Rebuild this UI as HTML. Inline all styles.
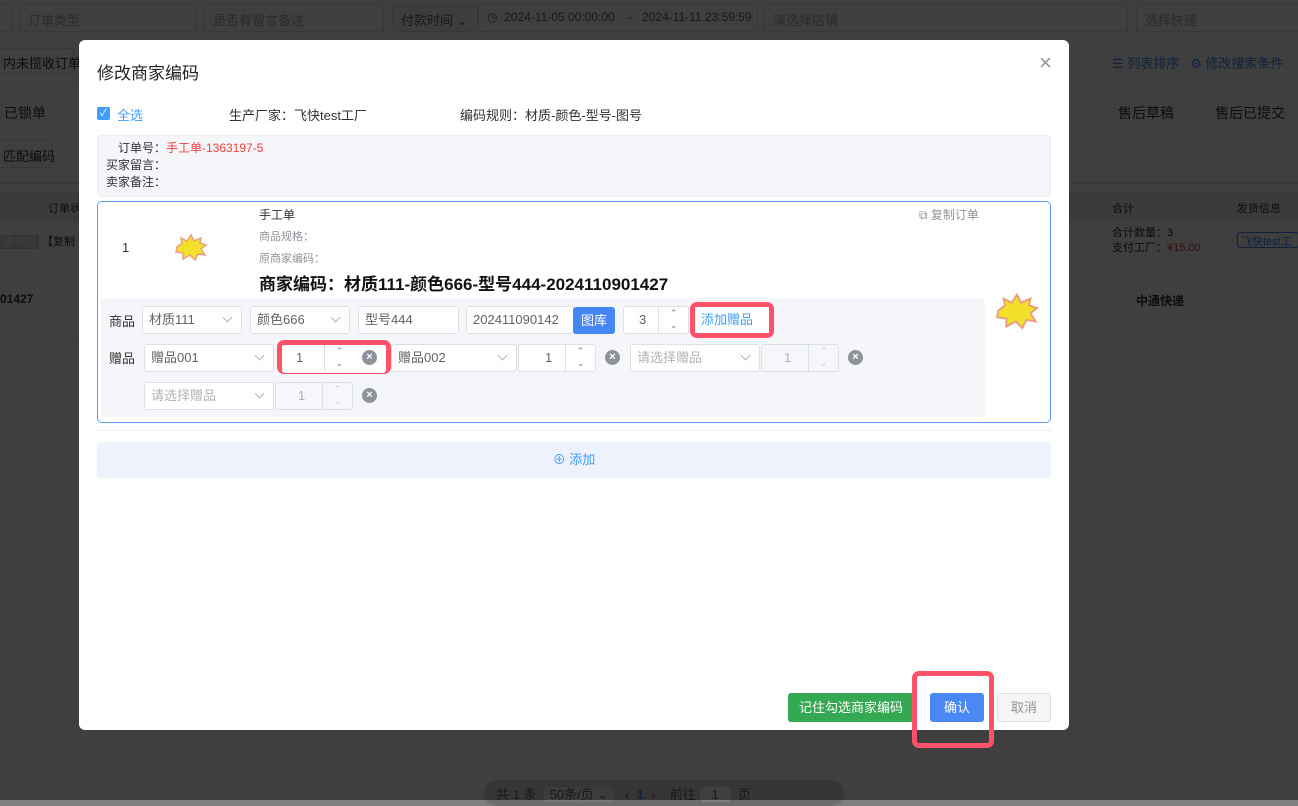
<!DOCTYPE html><html><head><meta charset="utf-8"><style>
*{box-sizing:border-box;margin:0;padding:0}
html,body{background:#fff}
body{width:1298px;height:800px;position:relative;overflow:hidden;font-family:"Liberation Sans","Noto Sans CJK SC",sans-serif;font-size:13px;color:#303133}
.a{position:absolute;white-space:nowrap}
.bg{border:1px solid #dcdfe6;border-radius:3px;background:#fff;color:#a8abb2}
.dlg{position:absolute;left:79px;top:40px;width:990px;height:690px;background:#fff;border-radius:6px;box-shadow:0 0 0 3000px rgba(0,0,0,0.5)}
.in{position:absolute;height:28px;border:1px solid #dcdfe6;border-radius:3px;background:#fff;font-size:13px;line-height:26px;padding-left:6px;color:#606266}
.chev{position:absolute;right:10px;top:7px;width:7px;height:7px;border-right:1px solid #b0b3b8;border-bottom:1px solid #b0b3b8;transform:rotate(45deg)}
.x{position:absolute;width:15px;height:15px;border-radius:50%;background:#8e939b;color:#fff;font-size:11px;line-height:15px;text-align:center;font-weight:bold}
.red{position:absolute;border:5px solid #ff5268;border-radius:7px}
.sp{position:absolute;right:0;top:0;width:30px;height:26px;border-left:1px solid #dcdfe6;font-size:9px;color:#777;text-align:center;line-height:12px}
</style></head><body>
<div class="a bg" style="left:-4px;top:4px;width:16px;height:28px"></div>
<div class="a bg" style="left:19px;top:4px;width:178px;height:28px;padding:5px 8px">订单类型</div>
<div class="a bg" style="left:204px;top:4px;width:180px;height:28px;padding:5px 8px">是否有留言备注</div>
<div class="a bg" style="left:392px;top:4px;width:86px;height:28px;padding:5px 8px;background:#f5f7fa;color:#606266">付款时间 ⌄</div>
<div class="a bg" style="left:478px;top:4px;width:280px;height:28px;padding:5px 8px;font-size:12px;color:#606266">◷ &nbsp;2024-11-05 00:00:00 &nbsp;&nbsp; - &nbsp;&nbsp;2024-11-11 23:59:59</div>
<div class="a bg" style="left:764px;top:4px;width:364px;height:28px;padding:5px 8px">请选择店铺</div>
<div class="a bg" style="left:1136px;top:4px;width:170px;height:28px;padding:5px 8px">选择快递</div>
<div class="a bg" style="left:-4px;top:48px;width:78px;height:26px;padding:4px 6px;color:#303133">内未揽收订单</div>
<div class="a" style="left:1112px;top:53px;color:#4586f5">☰ 列表排序 &nbsp;&nbsp;⚙ 修改搜索条件</div>
<div class="a" style="left:0;top:84px;width:1298px;height:1px;background:#e4e7ed"></div>
<div class="a" style="left:4px;top:103px;font-size:14px;color:#303133">已锁单</div>
<div class="a" style="left:1118px;top:103px;font-size:14px;color:#303133">售后草稿</div>
<div class="a" style="left:1215px;top:103px;font-size:14px;color:#303133">售后已提交</div>
<div class="a bg" style="left:-4px;top:140px;width:56px;height:28px;padding:5px 6px;color:#303133">匹配编码</div>
<div class="a" style="left:0;top:182px;width:1298px;height:2px;background:#e4e7ed"></div>
<div class="a" style="left:0;top:192px;width:1298px;height:30px;background:#e6ecf7"></div>
<div class="a" style="left:48px;top:200px;font-size:11px">订单状</div>
<div class="a" style="left:1112px;top:200px;font-size:11px">合计</div>
<div class="a" style="left:1237px;top:200px;font-size:11px">发货信息</div>
<div class="a" style="left:0;top:233px;font-size:11px"><span style="background:#d4d4d4;color:#fff;padding:1px 3px">待发货</span> 【复制</div>
<div class="a" style="left:1112px;top:226px;font-size:11px;line-height:15px">合计数量：3<br>支付工厂：<span style="color:#f03030">¥15.00</span></div>
<div class="a" style="left:1237px;top:232px;width:62px;height:16px;border:1px solid #4586f5;border-radius:3px;font-size:11px;color:#4586f5;padding-left:3px">飞快test工</div>
<div class="a" style="left:0;top:292px;font-size:12px;font-weight:bold">01427</div>
<div class="a" style="left:1136px;top:292px;font-size:12px;font-weight:bold">中通快递</div>
<div class="a" style="left:0;top:337px;width:1298px;height:1px;background:#e4e7ed"></div>
<div class="a" style="left:484px;top:780px;width:360px;height:26px;background:#d8d8d8;border-radius:13px;color:#606266;padding:4px 12px;font-size:13px">共 1 条 &nbsp;<span style="background:#f0f0f0;padding:0 6px;border-radius:3px">50条/页 ⌄</span> &nbsp;&nbsp;‹ &nbsp;<b style="color:#4586f5">1</b>&nbsp; › &nbsp;&nbsp;&nbsp;前往 <span style="background:#fff;padding:0 12px;border-radius:4px">1</span> &nbsp;页</div>
<svg class="a" style="left:0;top:0" width="1298" height="800"><rect width="1298" height="800" fill="#000" fill-opacity="0.5"/></svg>
<div class="dlg">
<div class="a" style="left:18px;top:19px;font-size:17px;color:#222">修改商家编码</div>
<div class="a" style="left:960px;top:10px;font-size:22px;color:#909399">×</div>
<div class="a" style="left:18px;top:67px;width:13px;height:13px;background:#409eff;border-radius:2px;color:#fff;font-size:10px;line-height:13px;text-align:center">✓</div>
<div class="a" style="left:38px;top:65px;color:#409eff">全选</div>
<div class="a" style="left:150px;top:65px">生产厂家：飞快test工厂</div>
<div class="a" style="left:381px;top:65px">编码规则：材质-颜色-型号-图号</div>
<div class="a" style="left:18px;top:95px;width:954px;height:62px;background:#f5f6f9;border:1px solid #ebeef5;border-radius:4px;font-size:12px;line-height:17px;padding:4px 8px">
<div style="padding-left:12px">订单号：<span style="color:#f04040">手工单-1363197-5</span></div><div>买家留言：</div><div>卖家备注：</div></div>
<div class="a" style="left:18px;top:161px;width:954px;height:222px;border:1px solid #5b9cf0;border-radius:5px"></div>
<div class="a" style="left:43px;top:200px">1</div>
<svg class="a" style="left:94px;top:193px" width="36" height="30" viewBox="0 0 36 30"><polygon points="4,14 9,10 8,5 14,8 18,2 21,8 28,5 27,10 33,12 28,16 32,22 25,21 22,27 17,22 10,26 10,20 3,19" fill="#f2e12a" stroke="#e8a080" stroke-width="1.5"/></svg>
<div class="a" style="left:180px;top:166px;font-size:12px">手工单</div>
<div class="a" style="left:180px;top:188px;font-size:11px;color:#909399">商品规格：</div>
<div class="a" style="left:180px;top:210px;font-size:11px;color:#909399">原商家编码：</div>
<div class="a" style="left:180px;top:230px;font-size:17px;font-weight:bold;color:#111">商家编码：材质111-颜色666-型号444-2024110901427</div>
<div class="a" style="left:840px;top:166px;font-size:12px;color:#909399">⧉ 复制订单</div>
<svg class="a" style="left:914px;top:252px" width="48" height="40" viewBox="0 0 36 30"><polygon points="4,14 9,10 8,5 14,8 18,2 21,8 28,5 27,10 33,12 28,16 32,22 25,21 22,27 17,22 10,26 10,20 3,19" fill="#f2e12a" stroke="#e8a080" stroke-width="1.5"/></svg>
<div class="a" style="left:22px;top:258px;width:884px;height:119px;background:#f5f6f9;border-radius:4px"></div>
<div class="a" style="left:30px;top:271px">商品</div>
<div class="in" style="left:63px;top:266px;width:100px">材质111<i class="chev"></i></div>
<div class="in" style="left:171px;top:266px;width:100px">颜色666<i class="chev"></i></div>
<div class="in" style="left:279px;top:266px;width:101px">型号444</div>
<div class="in" style="left:387px;top:266px;width:108px">202411090142</div>
<div class="a" style="left:494px;top:267px;width:42px;height:27px;background:#4586f5;border-radius:3px;color:#fff;text-align:center;line-height:27px">图库</div>
<div class="in" style="left:544px;top:266px;width:66px;text-align:left;padding-left:15px">3<div class="sp">⌃<br>⌄</div></div>
<div class="red" style="left:611px;top:262px;width:84px;height:36px"></div>
<div class="a" style="left:616px;top:267px;width:74px;height:26px;background:#fff;color:#409eff;line-height:26px;padding-left:6px">添加赠品</div>
<div class="a" style="left:30px;top:308px">赠品</div>
<div class="in" style="left:65px;top:304px;width:130px">赠品001<i class="chev"></i></div>
<div class="red" style="left:198px;top:300px;width:114px;height:34px"></div>
<div class="in" style="left:203px;top:305px;width:104px;border:none;padding-left:0"><span style="position:absolute;left:14px">1</span><div class="sp" style="right:32px;border-color:#ddd">⌃<br>⌄</div></div>
<div class="x" style="left:283px;top:310px">×</div>
<div class="in" style="left:312px;top:304px;width:126px">赠品002<i class="chev"></i></div>
<div class="in" style="left:439px;top:304px;width:78px;text-align:left;padding-left:26px">1<div class="sp">⌃<br>⌄</div></div>
<div class="x" style="left:526px;top:310px">×</div>
<div class="in" style="left:551px;top:304px;width:130px;color:#b0b3b8">请选择赠品<i class="chev"></i></div>
<div class="in" style="left:682px;top:304px;width:78px;text-align:left;padding-left:22px;background:#f5f7fa;color:#b0b3b8">1<div class="sp" style="color:#ccc">⌃<br>⌄</div></div>
<div class="x" style="left:769px;top:310px">×</div>
<div class="in" style="left:65px;top:342px;width:130px;color:#b0b3b8">请选择赠品<i class="chev"></i></div>
<div class="in" style="left:196px;top:342px;width:78px;text-align:left;padding-left:22px;background:#f5f7fa;color:#b0b3b8">1<div class="sp" style="color:#ccc">⌃<br>⌄</div></div>
<div class="x" style="left:283px;top:348px">×</div>
<div class="a" style="left:18px;top:390px;width:954px;height:1px;background:#ebeef5"></div>
<div class="a" style="left:18px;top:402px;width:954px;height:36px;background:#edf2fc;border-radius:3px;text-align:center;line-height:36px;color:#409eff">⊕ 添加</div>
<div class="a" style="left:709px;top:653px;width:126px;height:29px;background:#34a853;border-radius:3px;color:#fff;text-align:center;line-height:29px">记住勾选商家编码</div>
<div class="red" style="left:833px;top:631px;width:82px;height:77px"></div>
<div class="a" style="left:851px;top:653px;width:54px;height:29px;background:#4a89f5;border-radius:3px;color:#fff;text-align:center;line-height:29px">确认</div>
<div class="a" style="left:918px;top:653px;width:54px;height:29px;background:#f5f5f5;border:1px solid #dcdfe6;border-radius:3px;color:#909399;text-align:center;line-height:27px">取消</div>
</div>
</body></html>
